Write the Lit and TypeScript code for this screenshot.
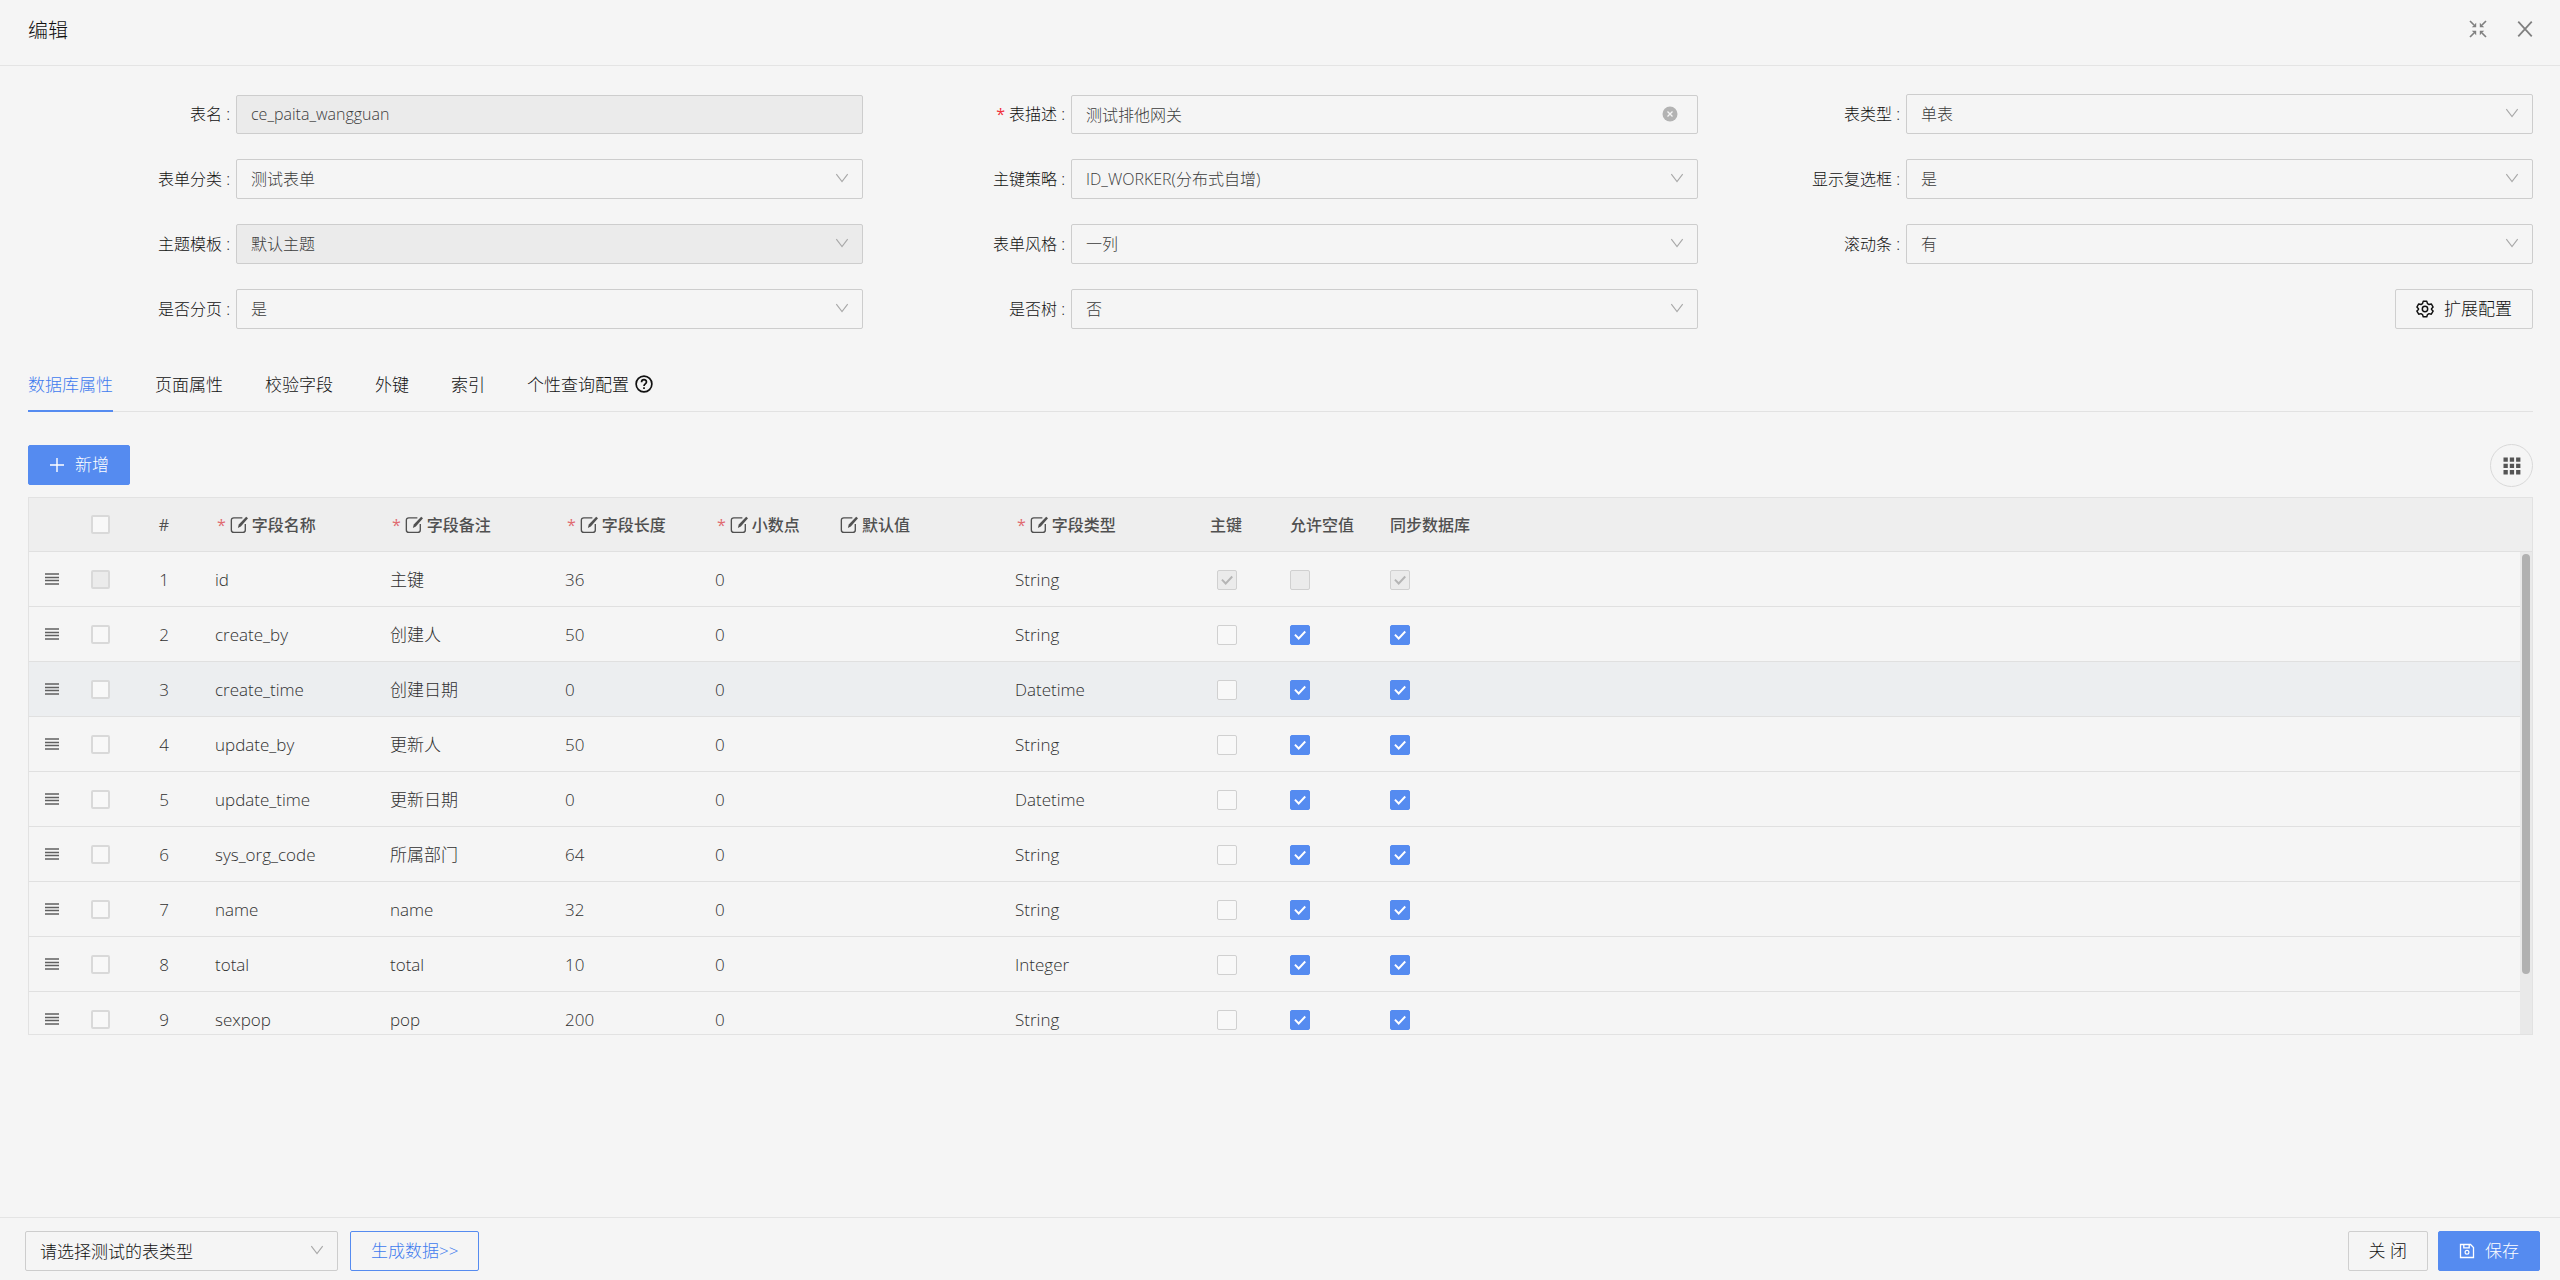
import { LitElement, html, css, svg, nothing } from "lit";
import { customElement, property, state } from "lit/decorators.js";
import { classMap } from "lit/directives/class-map.js";

const icon = (name: string, size: number, body: unknown, box = "0 0 16 16") =>
  html`<svg class="icon ${name}" width=${size} height=${size} viewBox=${box} fill="none" stroke="currentColor" aria-hidden="true">${body}</svg>`;

const chevron = () => icon("chevron", 14, svg`<path d="M1.5 3.5 L8 12 L14.5 3.5" stroke-width="1.3"/>`);
const compress = () =>
  icon("compress", 18, svg`<path d="M1 1 L5 5 M17 1 L13 5 M1 17 L5 13 M17 17 L13 13" stroke-width="1.7"/>
    <path d="M7.2 2.8 V7.2 H2.8 Z M10.8 2.8 V7.2 H15.2 Z M7.2 15.2 V10.8 H2.8 Z M10.8 15.2 V10.8 H15.2 Z" fill="currentColor" stroke="none"/>`, "0 0 18 18");
const closeIcon = () => icon("x", 18, svg`<path d="M2 1.5 L14 14.5 M14 1.5 L2 14.5" stroke-width="1.6"/>`);
const clearIcon = () =>
  icon("clear", 16, svg`<circle cx="8" cy="8" r="7.5" fill="currentColor" stroke="none"/><path d="M5.5 5.5 L10.5 10.5 M10.5 5.5 L5.5 10.5" stroke="#f5f5f5" stroke-width="1.3"/>`);
const gear = () =>
  icon("gear", 18, svg`<path d="M6.4 1.2 H9.6 L10.2 3.2 L11.6 4 L13.6 3.5 L15.2 6.3 L13.8 7.8 V8.4 L15.2 9.8 L13.6 12.6 L11.6 12.1 L10.2 12.9 L9.6 14.9 H6.4 L5.8 12.9 L4.4 12.1 L2.4 12.6 L0.8 9.8 L2.2 8.4 V7.8 L0.8 6.3 L2.4 3.5 L4.4 4 L5.8 3.2 Z" stroke-width="1.3" stroke-linejoin="round"/><circle cx="8" cy="8" r="2.4" stroke-width="1.3"/>`);
const help = () =>
  icon("help", 18, svg`<circle cx="8" cy="8" r="7" stroke-width="1.5"/><path d="M5.8 6.4 C5.8 3.4 10.2 3.5 10.2 6.2 C10.2 7.9 8 7.8 8 9.8" stroke-width="1.5"/><path d="M8 10.9 V12.4" stroke-width="1.5"/>`);
const plus = () => icon("plus", 16, svg`<path d="M8 1 V15 M1 8 H15" stroke-width="1.4"/>`);
const grid = () =>
  icon("grid", 18, svg`<path d="M.5 .5h4.3v4.3H.5z M6.8 .5h4.3v4.3h-4.3z M13.1 .5h4.3v4.3h-4.3z M.5 6.8h4.3v4.3H.5z M6.8 6.8h4.3v4.3h-4.3z M13.1 6.8h4.3v4.3h-4.3z M.5 13.1h4.3v4.3H.5z M6.8 13.1h4.3v4.3h-4.3z M13.1 13.1h4.3v4.3h-4.3z" fill="currentColor" stroke="none"/>`, "0 0 18 18");
const edit = () =>
  icon("edit", 18, svg`<path d="M11 1.6 H3.4 Q1.2 1.6 1.2 3.8 V12.4 Q1.2 14.6 3.4 14.6 H11.4 Q13.6 14.6 13.6 12.4 V7" stroke-width="1.2"/><path d="M7 10.6 L7.8 7.6 L14.4 0.6 L16 2 L9.6 9.4 Z" fill="currentColor" stroke="none"/>`);
const bars = () =>
  icon("bars", 14, svg`<path d="M0 2h14 M0 5.5h14 M0 8.5h14 M0 12h14" stroke-width="1.7"/>`, "0 0 14 14");
const save = () =>
  icon("save", 16, svg`<path d="M1.5 1.5 H11.5 L14.5 4.5 V14.5 H1.5 Z" stroke-width="1.3"/><path d="M4.8 1.8 V4.8 H10.2 V1.8" stroke-width="1.3"/><circle cx="8" cy="9.2" r="1.9" stroke-width="1.2"/>`);

interface Field {
  id: string;
  label: string;
  value: string;
  kind: "text" | "select";
  required?: boolean;
  disabled?: boolean;
}

const FIELDS: Field[] = [
  { id: "tableName", label: "表名", value: "ce_paita_wangguan", kind: "text", disabled: true },
  { id: "tableTxt", label: "表描述", value: "测试排他网关", kind: "text", required: true },
  { id: "tableType", label: "表类型", value: "单表", kind: "select" },
  { id: "formCategory", label: "表单分类", value: "测试表单", kind: "select" },
  { id: "idType", label: "主键策略", value: "ID_WORKER(分布式自增)", kind: "select" },
  { id: "isCheckbox", label: "显示复选框", value: "是", kind: "select" },
  { id: "theme", label: "主题模板", value: "默认主题", kind: "select", disabled: true },
  { id: "formTemplate", label: "表单风格", value: "一列", kind: "select" },
  { id: "scroll", label: "滚动条", value: "有", kind: "select" },
  { id: "isPage", label: "是否分页", value: "是", kind: "select" },
  { id: "isTree", label: "是否树", value: "否", kind: "select" },
];

const TABS = ["数据库属性", "页面属性", "校验字段", "外键", "索引", "个性查询配置"];

interface Row {
  name: string;
  note: string;
  length: string;
  type: string;
}

const ROWS: Row[] = [
  { name: "id", note: "主键", length: "36", type: "String" },
  { name: "create_by", note: "创建人", length: "50", type: "String" },
  { name: "create_time", note: "创建日期", length: "0", type: "Datetime" },
  { name: "update_by", note: "更新人", length: "50", type: "String" },
  { name: "update_time", note: "更新日期", length: "0", type: "Datetime" },
  { name: "sys_org_code", note: "所属部门", length: "64", type: "String" },
  { name: "name", note: "name", length: "32", type: "String" },
  { name: "total", note: "total", length: "10", type: "Integer" },
  { name: "sexpop", note: "pop", length: "200", type: "String" },
];

const base = css`
  * { box-sizing: border-box; }
  :host { color: #111; font-family: "Open Sans", "Noto Sans CJK SC", sans-serif; font-size: 17px; font-weight: 300; }
  button, input, select { font: inherit; color: inherit; margin: 0; }
  .icon { display: block; flex: none; }
  .btn {
    height: 40px; padding: 0 20px; display: inline-flex; align-items: center; justify-content: center; gap: 10px;
    border: 1px solid #cfcfcf; border-radius: 2px; background: transparent; white-space: nowrap; line-height: 24px;
  }
  .btn.primary { border-color: #558bf0; background: #558bf0; color: #fff; }
  .btn.ghost { border-color: #558bf0; color: #3f7bee; }
  .select { position: relative; display: flex; min-width: 0; }
  .select select, .text input {
    appearance: none; width: 100%; height: 40px; padding: 0 40px 0 14px;
    border: 1px solid #cdcdcd; border-radius: 2px; background: transparent; outline: none;
  }
  .select .chevron { position: absolute; right: 14px; top: 12px; color: #a8a8a8; pointer-events: none; }
  :disabled { opacity: 1; }
`;

@customElement("form-field")
class FormField extends LitElement {
  @property({ attribute: false }) field!: Field;

  static styles = [
    base,
    css`
      :host { display: grid; grid-template-columns: 208px 1fr; align-items: center; font-size: 16px; }
      .label { text-align: right; padding-right: 6px; line-height: 24px; white-space: nowrap; }
      .required { color: #f0303a; font-weight: 400; margin-right: 4px; }
      .text { position: relative; display: flex; }
      .text input, .select select { color: #3c3c3c; }
      .text input { height: 39px; }
      .text input:disabled, .select select:disabled { background: #ebebeb; }
      .clear-btn { position: absolute; right: 20px; top: 11px; padding: 0; border: 0; background: none; color: #b3b3b3; }
    `,
  ];

  render() {
    const f = this.field;
    return html`
      <label class="label" for=${f.id}>${f.required ? html`<span class="required">*</span>` : nothing}${f.label} :</label>
      ${f.kind === "select"
        ? html`<div class="select">
            <select id=${f.id} ?disabled=${f.disabled}><option>${f.value}</option></select>${chevron()}
          </div>`
        : html`<div class="text">
            <input id=${f.id} type="text" .value=${f.value} ?disabled=${f.disabled} />
            ${f.required ? html`<button class="clear-btn" aria-label="清除">${clearIcon()}</button>` : nothing}
          </div>`}
    `;
  }
}

@customElement("column-table")
class ColumnTable extends LitElement {
  static styles = [
    base,
    css`
      :host { display: block; border: 1px solid #e2e2e2; }
      .scroller { display: grid; grid-template-columns: 1fr 12px; height: 482px; overflow: hidden; }
      .body { overflow: hidden; }
      table { width: 100%; table-layout: fixed; border-collapse: separate; border-spacing: 0; color: #303030; }
      th, td { padding: 0; text-align: left; white-space: nowrap; border-bottom: 1px solid #e0e0e0; line-height: 24px; }
      th { height: 54px; background: #eee; font-size: 16px; font-weight: 500; color: #505050; }
      td { height: 55px; padding-top: 2px; }
      td.drag, td.pick { padding-top: 0; }
      .drag { width: 46px; }
      .drag .icon { margin: 0 auto; color: #606060; }
      .pick { width: 50px; text-align: center; }
      .seq { width: 86px; text-align: center; padding-right: 8px; }
      .w175 { width: 175px; }
      .w150 { width: 150px; }
      .w125 { width: 125px; }
      .w195 { width: 195px; }
      .w80 { width: 80px; }
      .w100 { width: 100px; }
      .c-name { padding-left: 4px; }
      .head { display: flex; align-items: center; gap: 4px; }
      .req { color: #e06a70; font-weight: 400; padding-left: 2px; line-height: 20px; }
      .hover td { background: #eceef0; }
      input[type="checkbox"] {
        appearance: none; display: block; width: 20px; height: 20px; border: 1px solid #d0d0d0; border-radius: 2px;
        background: #f8f8f8;
      }
      .pick input[type="checkbox"] { margin: 0 auto; width: 19px; height: 19px; border: 2px solid #d9d9d9; }
      input[type="checkbox"]:disabled { background-color: #ebebeb; }
      .tick { position: relative; display: block; width: 20px; height: 20px; }
      .tick .icon { position: absolute; left: 3px; top: 3px; color: #fff; pointer-events: none; }
      .tick.off .icon { color: #b5b5b5; }
      .tick input:checked:enabled { background: #558bf0; border-color: #558bf0; }
      .key .tick { margin-left: 7px; }
      .track { background: #e9e9e9; padding: 2px 2px; }
      .thumb { height: 420px; border-radius: 4px; background: #b1b1b1; }
    `,
  ];

  private head(text: string, required = true) {
    return html`<span class="head">${required ? html`<span class="req">*</span>` : nothing}${edit()}<span>${text}</span></span>`;
  }

  private tick(label: string, checked: boolean, disabled: boolean) {
    return html`<span class=${classMap({ tick: true, off: disabled })}>
      <input type="checkbox" aria-label=${label} .checked=${checked} ?disabled=${disabled} />
      ${checked ? icon("check", 14, svg`<path d="M2.2 7.5 L6.5 12 L14 4" stroke-width="2.2"/>`) : nothing}
    </span>`;
  }

  render() {
    return html`
      <table>
        <thead>
          <tr>
            <th class="drag"></th>
            <th class="pick"><input type="checkbox" aria-label="全选" /></th>
            <th class="seq">#</th>
            <th class="w175 c-name">${this.head("字段名称")}</th>
            <th class="w175 c-name">${this.head("字段备注")}</th>
            <th class="w150 c-name">${this.head("字段长度")}</th>
            <th class="w125 c-name">${this.head("小数点")}</th>
            <th class="w175 c-name">${this.head("默认值", false)}</th>
            <th class="w195 c-name">${this.head("字段类型")}</th>
            <th class="w80 c-name">主键</th>
            <th class="w100 c-name">允许空值</th>
            <th class="c-name">同步数据库</th>
          </tr>
        </thead>
      </table>
      <div class="scroller">
        <div class="body">
          <table>
            <tbody>
              ${ROWS.map((r, i) => {
                const first = i === 0;
                return html`<tr class=${classMap({ hover: i === 2 })}>
                  <td class="drag">${bars()}</td>
                  <td class="pick"><input type="checkbox" aria-label=${r.name} ?disabled=${first} /></td>
                  <td class="seq">${i + 1}</td>
                  <td class="w175 c-name">${r.name}</td>
                  <td class="w175 c-name">${r.note}</td>
                  <td class="w150 c-name">${r.length}</td>
                  <td class="w125 c-name">0</td>
                  <td class="w175 c-name"></td>
                  <td class="w195 c-name">${r.type}</td>
                  <td class="w80 c-name key">${this.tick("主键", first, first)}</td>
                  <td class="w100 c-name">${this.tick("允许空值", !first, first)}</td>
                  <td class="c-name">${this.tick("同步数据库", true, first)}</td>
                </tr>`;
              })}
            </tbody>
          </table>
        </div>
        <div class="track"><div class="thumb"></div></div>
      </div>
    `;
  }
}

@customElement("app-root")
class AppRoot extends LitElement {
  @state() private tab = 0;

  static styles = [
    base,
    css`
      :host { display: flex; flex-direction: column; min-height: 100vh; background: #f5f5f5; }
      header {
        height: 66px; padding: 0 26px 8px 28px; display: flex; align-items: center; justify-content: space-between;
        border-bottom: 1px solid #e4e4e4;
      }
      h1 { margin: 0; padding-top: 4px; font-size: 20px; line-height: 28px; font-weight: 300; }
      .tools { display: flex; gap: 29px; color: #808080; }
      .tools button { padding: 0; border: 0; background: none; color: inherit; }
      main { flex: 1; padding: 28px 27px 0 28px; }
      .form { display: grid; grid-template-columns: repeat(3, 1fr); row-gap: 25px; }
      .ext { display: flex; justify-content: flex-end; }
      .tabs { margin-top: 28px; height: 55px; display: flex; gap: 42px; border-bottom: 1px solid #e2e2e2; }
      .tab {
        display: flex; align-items: center; gap: 6px; padding: 0; border: 0; background: none; height: 55px;
        border-bottom: 2px solid transparent; white-space: nowrap;
      }
      .tab.on { color: #3f7bee; border-bottom-color: #558bf0; }
      .bar { height: 85px; padding-top: 21px; display: flex; align-items: center; justify-content: space-between; }
      .round {
        width: 43px; height: 43px; padding: 2px 0 0; border: 1px solid #d9d9d9; border-radius: 50%; background: transparent;
        display: flex; align-items: center; justify-content: center; color: #555;
      }
      footer {
        height: 63px; padding: 4px 20px 0 25px; border-top: 1px solid #e4e4e4; display: flex; align-items: center; gap: 12px;
      }
      footer .select { width: 313px; }
      .right { margin-left: auto; display: flex; gap: 10px; }
    `,
  ];

  render() {
    return html`
      <header>
        <h1>编辑</h1>
        <div class="tools">
          <button aria-label="还原">${compress()}</button>
          <button aria-label="关闭窗口">${closeIcon()}</button>
        </div>
      </header>
      <main>
        <div class="form">
          ${FIELDS.map((f) => html`<form-field .field=${f}></form-field>`)}
          <div class="ext"><button class="btn">${gear()}扩展配置</button></div>
        </div>
        <nav class="tabs" role="tablist">
          ${TABS.map(
            (t, i) => html`<button role="tab" aria-selected=${i === this.tab} class=${classMap({ tab: true, on: i === this.tab })}
              @click=${() => (this.tab = i)}>${t}${i === 5 ? help() : nothing}</button>`
          )}
        </nav>
        <div class="bar">
          <button class="btn primary">${plus()}新增</button>
          <button class="round" aria-label="列设置">${grid()}</button>
        </div>
        <column-table></column-table>
      </main>
      <footer>
        <div class="select">
          <select aria-label="测试的表类型"><option>请选择测试的表类型</option></select>${chevron()}
        </div>
        <button class="btn ghost">生成数据&gt;&gt;</button>
        <div class="right">
          <button class="btn">关 闭</button>
          <button class="btn primary">${save()}保存</button>
        </div>
      </footer>
    `;
  }
}
